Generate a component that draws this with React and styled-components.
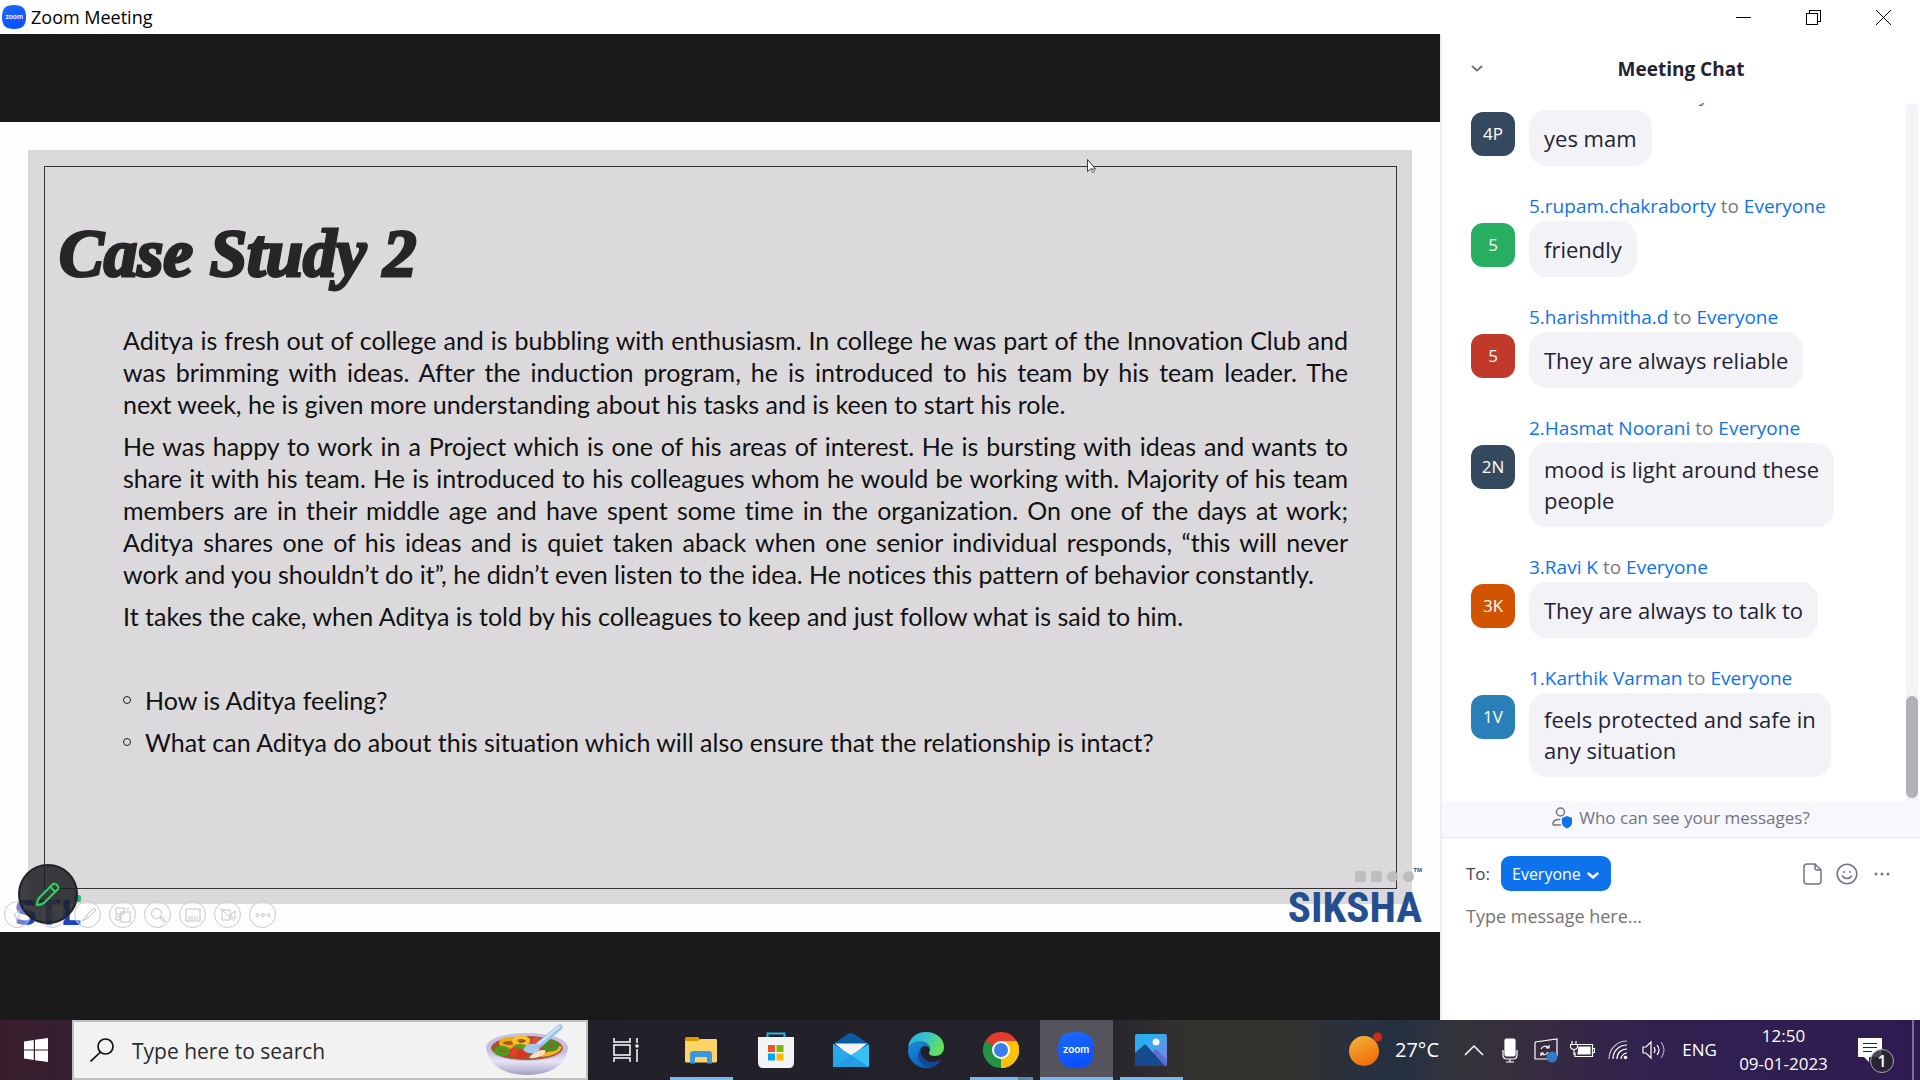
import React from "react";
import styled, { createGlobalStyle } from "styled-components";

const ui = `"Open Sans", "Noto Sans", sans-serif`;

const GlobalStyle = createGlobalStyle`
  *, *::before, *::after { box-sizing: border-box; }
  html, body, #root { height: 100%; }
  body { margin: 0; font-family: ${ui}; background: #fff; overflow: hidden; }
  button { font: inherit; color: inherit; background: none; border: 0; padding: 0; }
  svg { display: block; flex: none; }
`;

const Desktop = styled.div`
  display: grid;
  grid-template-rows: 34px minmax(0, 1fr) 60px;
  height: 100vh;
`;

/* Title bar */
const TitleBar = styled.header`
  display: flex;
  align-items: center;
  gap: 5px;
  padding: 0 2px;
  background: #fff;
`;
const WindowTitle = styled.h1`
  flex: 1;
  margin: 0;
  font-size: 18px;
  line-height: 24px;
  font-weight: 400;
  color: #000;
`;
const WindowButtons = styled.div`
  display: flex;
`;
const WindowButton = styled.button`
  display: grid;
  place-items: center;
  width: 70px;
  height: 34px;
`;

/* Meeting window */
const Meeting = styled.main`
  display: grid;
  grid-template-columns: minmax(0, 1fr) 480px;
  min-height: 0;
`;
const Stage = styled.section`
  display: flex;
  flex-direction: column;
  justify-content: center;
  background: #1a1a1a;
  min-height: 0;
`;
const Share = styled.div`
  position: relative;
  aspect-ratio: 16 / 9;
  padding: 28px;
  background: #fefefe;
`;
const Slide = styled.article`
  height: 100%;
  padding: 16px 15px 15px 16px;
  background: #dbd9dc;
`;
const SlideFrame = styled.div`
  height: 100%;
  padding: 46px 48px 0 14px;
  border: 1px solid #333;
`;
const SlideTitle = styled.h2`
  margin: 0 0 31px;
  font: italic 700 67px/80px "Liberation Serif", serif;
  color: #262626;
  -webkit-text-stroke: 3px #262626;
`;
const SlideBody = styled.div`
  display: flex;
  flex-direction: column;
  gap: 10px;
  padding-left: 64px;
  font: 400 25px/32px Lato, sans-serif;
  font-variant-ligatures: none;
  color: #111;
`;
const Paragraph = styled.p`
  margin: 0;
`;
const Line = styled.span`
  display: block;
  white-space: nowrap;
  text-align: justify;
  text-align-last: ${(p) => (p.$last ? "left" : "justify")};
`;
const Questions = styled.ul`
  display: flex;
  flex-direction: column;
  gap: 10px;
  margin: 42px 0 0;
  padding: 0;
  list-style: none;
`;
const Question = styled.li`
  display: flex;
  align-items: center;
  gap: 14px;
  &::before {
    content: "";
    width: 8px;
    height: 8px;
    border: 1px solid #222;
    border-radius: 50%;
  }
`;
const Pointer = styled.svg`
  position: absolute;
  left: 1087px;
  top: 37px;
`;
const StlLogo = styled.div`
  position: absolute;
  left: 14px;
  bottom: -4px;
  font: 700 33px/45px "DejaVu Sans", sans-serif;
  color: #1a41c8;
  &::after {
    content: "";
    position: absolute;
    right: 0;
    top: 4px;
    width: 7px;
    height: 7px;
    border-radius: 2px;
    background: #25b873;
  }
`;
const SlideTools = styled.div`
  position: absolute;
  left: 4px;
  bottom: 4px;
  display: flex;
  gap: 8px;
`;
const SlideTool = styled.button`
  display: grid;
  place-items: center;
  width: 27px;
  height: 27px;
  border: 1px solid #c9c8cb;
  border-radius: 50%;
  background: rgba(255, 255, 255, 0.35);
`;
const PenButton = styled.button`
  position: absolute;
  left: 18px;
  bottom: 8px;
  display: grid;
  place-items: center;
  width: 60px;
  height: 60px;
  border: 2px solid #202327;
  border-radius: 50%;
  background: rgba(30, 32, 36, 0.86);
`;
const Siksha = styled.div`
  position: absolute;
  right: 18px;
  bottom: 0;
  width: 136px;
  color: #234f90;
`;
const SikshaDots = styled.div`
  display: flex;
  gap: 5px;
  justify-content: flex-end;
  padding-right: 8px;
`;
const SikshaDot = styled.span`
  width: 11px;
  height: 11px;
  border-radius: ${(p) => (p.$round ? "50%" : "1px")};
  background: #bfbdc2;
`;
const Trademark = styled.span`
  position: absolute;
  right: 0;
  top: -5px;
  font: 700 6px/8px "Liberation Sans", sans-serif;
`;
const SikshaName = styled.div`
  font: 700 43px/50px "Roboto Condensed", Roboto, sans-serif;
  text-align: right;
`;

/* Chat */
const Chat = styled.aside`
  display: flex;
  flex-direction: column;
  min-height: 0;
  border-left: 2px solid #ededf3;
  background: #fff;
`;
const ChatHeader = styled.div`
  display: grid;
  grid-template-columns: 40px 1fr 40px;
  align-items: center;
  justify-items: center;
  height: 69px;
  padding: 0 15px;
`;
const IconButton = styled.button`
  display: grid;
  place-items: center;
  height: 24px;
`;
const ChatTitle = styled.h2`
  margin: 0;
  text-align: center;
  font-size: 19px;
  line-height: 26px;
  font-weight: 700;
  color: #232333;
`;
const Feed = styled.div`
  flex: 1;
  min-height: 0;
  display: flex;
`;
const Messages = styled.ol`
  flex: 1;
  display: flex;
  flex-direction: column;
  justify-content: flex-end;
  gap: 27px;
  margin: 0;
  padding: 0 24px 24px 29px;
  overflow: hidden;
  list-style: none;
`;
const Message = styled.li`
  display: grid;
  grid-template-columns: 44px minmax(0, 1fr);
  column-gap: 14px;
  row-gap: 2px;
  justify-items: start;
`;
const Sender = styled.div`
  grid-column: 2;
  font-size: 19px;
  line-height: 26px;
  white-space: nowrap;
  color: #7a7a7a;
`;
const PersonLink = styled.a`
  color: #0e72ed;
  text-decoration: none;
`;
const Avatar = styled.div`
  display: grid;
  place-items: center;
  width: 44px;
  height: 44px;
  margin-top: 2px;
  border-radius: 12px;
  background: ${(p) => p.$color};
  color: #fff;
  font-size: 17px;
  line-height: 24px;
`;
const Bubble = styled.p`
  display: flex;
  align-items: center;
  max-width: 310px;
  min-height: 56px;
  margin: 0;
  padding: 11px 15px;
  border-radius: 18px;
  background: #f2f2f7;
  color: #232333;
  font-size: 22px;
  line-height: 31px;
  white-space: pre-line;
`;
const ScrollTrack = styled.div`
  display: flex;
  flex-direction: column;
  justify-content: flex-end;
  width: 12px;
  margin-right: 2px;
  padding-bottom: 3px;
  border-radius: 6px 6px 0 0;
  background: #f2f2f7;
`;
const ScrollThumb = styled.div`
  height: 102px;
  border-radius: 6px;
  background: #b0b0ba;
`;
const Privacy = styled.button`
  display: flex;
  align-items: center;
  justify-content: center;
  gap: 6px;
  height: 37px;
  padding-bottom: 2px;
  border-bottom: 1px solid #e6e6ee;
  background: #f7f7fc;
  color: #747487;
  font-size: 17px;
  line-height: 24px;
`;
const Composer = styled.form`
  display: flex;
  flex-direction: column;
  gap: 8px;
  height: 182px;
  padding: 18px 28px 0 24px;
`;
const Recipients = styled.div`
  display: flex;
  align-items: center;
  gap: 14px;
`;
const ToLabel = styled.label`
  width: 21px;
  color: #444455;
  font-size: 17px;
  line-height: 24px;
`;
const SelectBox = styled.div`
  position: relative;
  margin-right: auto;
  svg { position: absolute; right: 12px; top: 16px; pointer-events: none; }
`;
const ToSelect = styled.select`
  appearance: none;
  width: 110px;
  height: 35px;
  padding: 0 30px 0 11px;
  border: 0;
  border-radius: 9px;
  background: #0e72ed;
  color: #fff;
  font: 400 16px/24px ${ui};
`;
const MessageBox = styled.textarea`
  flex: 1;
  padding: 0;
  border: 0;
  outline: 0;
  resize: none;
  font: 400 18px/34px ${ui};
  &::placeholder { color: #747474; opacity: 1; }
`;

/* Taskbar */
const Taskbar = styled.footer`
  display: flex;
  color: #fff;
  background: linear-gradient(90deg, #3a1d2d 0%, #33202f 4%, #211f27 30%, #232129 50%, #25232c 57%,
    #34322f 62%, #34322f 67%, #2a303b 70%, #243142 73%, #35343a 76%, #362c40 80%, #302150 86%, #2f1b51 100%);
`;
const StartButton = styled.button`
  display: grid;
  place-items: center;
  width: 72px;
`;
const SearchBox = styled.label`
  display: flex;
  align-items: center;
  gap: 18px;
  width: 516px;
  padding: 0 17px 0 16px;
  border: 2px solid #bfbfbf;
  background: #f2f2f2;
`;
const SearchInput = styled.input`
  flex: 1;
  min-width: 0;
  padding: 2px 0 0;
  border: 0;
  outline: 0;
  background: none;
  font: 400 21px/30px ${ui};
  &::placeholder { color: #2b2b2b; opacity: 1; }
`;
const Apps = styled.nav`
  display: flex;
  flex: 1;
  gap: 2px;
  padding-left: 2px;
`;
const AppButton = styled.button`
  display: grid;
  place-items: center;
  width: 73px;
  height: 60px;
  background: ${(p) => (p.$active ? "#55535b" : "none")};
  border-bottom: 3px solid transparent;
  padding: 3px 2px 0 0;
  border-image: ${(p) =>
    p.$active
      ? "linear-gradient(#76b9ed, #76b9ed) 1"
      : p.$stacked
      ? "linear-gradient(90deg, transparent 6px, #76b9ed 6px, #76b9ed 53px, #55809f 53px, #5f8fb5 67px, transparent 67px) 1"
      : p.$open
      ? "linear-gradient(90deg, transparent 6px, #76b9ed 6px, #76b9ed 67px, transparent 67px) 1"
      : "none"};
`;
const Tray = styled.div`
  display: flex;
  align-items: stretch;
`;
const Weather = styled.button`
  display: flex;
  align-items: center;
  gap: 12px;
  padding-right: 17px;
  font-size: 20px;
  line-height: 28px;
`;
const TrayButton = styled.button`
  display: grid;
  place-items: center;
  width: 36px;
`;
const Language = styled.button`
  width: 55px;
  font-size: 17px;
  line-height: 24px;
`;
const Clock = styled.button`
  width: 113px;
  text-align: center;
  font-size: 17px;
  line-height: 28px;
`;
const Time = styled.time`
  display: block;
`;
const Notifications = styled.button`
  position: relative;
  width: 72px;
  svg { position: absolute; left: 18px; top: 18px; }
`;
const Count = styled.span`
  position: absolute;
  left: 30px;
  top: 29px;
  width: 24px;
  height: 24px;
  border: 1px solid #a9a6b3;
  border-radius: 50%;
  background: rgba(40, 38, 48, 0.85);
  font-size: 16px;
  line-height: 22px;
  font-weight: 600;
`;
const ShowDesktop = styled.button`
  width: 8px;
  border-left: 2px solid #7c6f92;
`;

const ZoomMark = ({ size }) => (
  <svg width={size} height={size} viewBox="0 0 36 36">
    <defs>
      <linearGradient id="zm" x1="0" y1="0" x2="0.3" y2="1">
        <stop offset="0" stopColor="#1a6bff" />
        <stop offset="1" stopColor="#0b50fa" />
      </linearGradient>
    </defs>
    <path d="M18 0C31 0 36 5 36 18S31 36 18 36 0 31 0 18 5 0 18 0z" fill="url(#zm)" />
    <text x="18" y="21" textAnchor="middle" fontFamily="Inter, sans-serif" fontWeight="600" fontSize="10" fill="#fff">zoom</text>
  </svg>
);

const toolIcons = [
  <path d="M9 3 4 8l5 5z" />,
  <path d="M5 3v10l6-5z" />,
  <path d="m14 1-8 8 2 2 8-8zM6 9l-4 5 6-3z" />,
  <g><rect x="1" y="1" width="8" height="6" /><rect x="6" y="5" width="9" height="10" /><path d="M1 9h4v4H1zM11 2h3" /></g>,
  <g><circle cx="6.5" cy="6.5" r="5" /><path d="m10 11 1-1 5 4-1.500 1.500z" /></g>,
  <g><rect x="1" y="2" width="14" height="12" /><path d="M3 10h10M3 12h10" strokeDasharray="2 1" /></g>,
  <g><path d="M2 3h8v10H2zM11 7l4-3v8l-4-3zM0 1l14 13" /></g>,
  <g><circle cx="2.500" cy="8" r="1.500" /><circle cx="8" cy="8" r="1.500" /><circle cx="13.500" cy="8" r="1.500" /></g>,
];
const toolNames = ["Previous", "Next", "Pen", "All slides", "Magnify", "Captions", "Camera", "More"];

const Bowl = () => (
  <svg width="84" height="52" viewBox="0 0 84 52">
    <defs>
      <linearGradient id="bw" x1="0" y1="0" x2="0" y2="1">
        <stop offset="0" stopColor="#b9b0d6" />
        <stop offset="0.5" stopColor="#e8e6f5" />
        <stop offset="1" stopColor="#a59dc6" />
      </linearGradient>
    </defs>
    <path d="M1 23C3 42 20 51 42 51S81 42 83 23z" fill="url(#bw)" />
    <ellipse cx="42" cy="23" rx="41" ry="14" fill="#c7c1e0" />
    <ellipse cx="42" cy="24" rx="36" ry="12" fill="#a4552f" />
    <g fill="none" strokeWidth="4">
      <ellipse cx="24" cy="19" rx="8" ry="4" stroke="#f5a90b" />
      <ellipse cx="36" cy="17" rx="7" ry="4" stroke="#ffc22c" />
      <path d="M56 31c9 0 18-4 19-9" stroke="#f9b22b" />
      <ellipse cx="17" cy="27" rx="6" ry="3" stroke="#4c9c1c" />
      <ellipse cx="66" cy="22" rx="6" ry="3.500" stroke="#3f961f" />
      <ellipse cx="35" cy="24" rx="5" ry="2" stroke="#579b22" />
    </g>
    <circle cx="51" cy="17" r="4" fill="#e54b30" />
    <circle cx="30" cy="28" r="5" fill="#e23d28" />
    <circle cx="37" cy="30" r="5" fill="#d63423" />
    <path d="M44 34c4-6 9-8 16-8 2 4-6 9-16 8z" fill="#f8dfc4" />
    <path d="M38 26c2-5 8-8 14-5l3 4c-3 5-12 6-17 1z" fill="#a9c9ec" />
    <path d="M50 20 73 1c3-2 6 1 4 4L55 24z" fill="#9dc3ee" />
    <path d="M53 20 75 2" stroke="#d4e7fb" strokeWidth="2" />
  </svg>
);

const apps = [
  { name: "Task View", icon: (
    <svg width="26" height="26" viewBox="0 0 26 26" fill="none" stroke="#fff" strokeWidth="1.500">
      <path d="M1 1v4h16V1M1 25v-4h16v4M1 8h16v10H1zM24 1v5M24 12v13" /><path d="M22.500 7.500h3v3h-3z" fill="#fff" stroke="none" />
    </svg>) },
  { name: "File Explorer", open: true, icon: (
    <svg width="32" height="27" viewBox="0 0 32 27">
      <path d="M0 1.500Q0 0 1.500 0H13l2 2v4H0z" fill="#dd9a00" />
      <path d="M0 4h13l3-2h15q1 0 1 1v21q0 1.500-1.500 1.500h-29Q0 25.500 0 24z" fill="#fdd465" />
      <path d="M5 26.500V17q0-3 3-3h16q3 0 3 3v9.500h-5V20H10v6.500z" fill="#3a96dd" />
    </svg>) },
  { name: "Microsoft Store", icon: (
    <svg width="36" height="36" viewBox="0 0 36 36">
      <path d="M9.500 8V1.500h17V8" fill="none" stroke="#2bb5ec" strokeWidth="2" />
      <path d="M0 5h36v25q0 6-5 6H5q-5 0-5-6z" fill="#f4f4f4" />
      <path d="M10 13h7v7h-7z" fill="#f25022" /><path d="M18.500 13h7v7h-7z" fill="#7fba00" />
      <path d="M10 21.500h7v7h-7z" fill="#00a4ef" /><path d="M18.500 21.500h7v7h-7z" fill="#ffb900" />
    </svg>) },
  { name: "Mail", icon: (
    <svg width="36" height="34" viewBox="0 0 36 34">
      <path d="M0 11 15 1q3-2 6 0l15 10-18 13z" fill="#0c59a4" />
      <path d="M2 10.500h32L18 24z" fill="#f3f3f5" />
      <path d="M0 11l18 11 18-11v23H0z" fill="#35c1f1" />
      <path d="M0 11l36 23H0z" fill="#28a8ea" />
      <path d="M18 22 36 34H0z" fill="#1a8ad8" opacity=".35" />
    </svg>) },
  { name: "Edge", icon: (
    <svg width="36" height="36" viewBox="0 0 36 36">
      <defs>
        <linearGradient id="eg" x1="0" y1="0" x2="1" y2="0.400">
          <stop offset="0" stopColor="#28a9e8" /><stop offset="0.5" stopColor="#34c5c9" /><stop offset="1" stopColor="#63e05a" />
        </linearGradient>
        <linearGradient id="eb" x1="0" y1="0" x2="0.600" y2="1">
          <stop offset="0" stopColor="#1b8fdc" /><stop offset="1" stopColor="#0a5fb8" />
        </linearGradient>
      </defs>
      <path d="M0 16C1 6 8 0 18 0c11 0 18 7 18 15 0 6-4 9-9 9-4 0-6-1-6-3 0-1 1-2 1-4 0-4-4-7-9-7C6 10 2 12 0 16z" fill="url(#eg)" />
      <path d="M0 18C1 12 6 9 12 9c6 0 10 4 10 8-1-2-3-3-5-3-4 0-6 4-5 9 1 6 6 11 13 12-2 1-5 1-7 1C8 36 0 28 0 18z" fill="url(#eb)" />
      <path d="M13 18c-1 6 4 12 12 12 3 0 6-1 8-3-2 5-6 8-10 8-7 0-13-5-13-11 0-3 1-5 3-6z" fill="#15489a" />
    </svg>) },
  { name: "Chrome", stacked: true, icon: (
    <svg width="36" height="36" viewBox="0 0 36 36">
      <path d="M18 18 2.400 9A18 18 0 0 1 33.600 9z" fill="#e33b2e" />
      <path d="M18 18 33.600 9A18 18 0 0 1 18 36z" fill="#fdc10c" />
      <path d="M18 18 18 36A18 18 0 0 1 2.400 9z" fill="#229342" />
      <path d="M18 9h15.600A18 18 0 0 1 18 36l7.800-13.500z" fill="#fdc10c" />
      <circle cx="18" cy="18" r="9" fill="#fff" /><circle cx="18" cy="18" r="7" fill="#3b7ded" />
    </svg>) },
  { name: "Zoom", active: true, icon: <ZoomMark size={36} /> },
  { name: "Photos", open: true, icon: (
    <svg width="32" height="32" viewBox="0 0 32 32">
      <defs>
        <linearGradient id="ph" x1="0" y1="0" x2="1" y2="1">
          <stop offset="0.300" stopColor="#2aaef0" /><stop offset="1" stopColor="#8a7fe0" />
        </linearGradient>
        <clipPath id="phc"><rect width="32" height="32" rx="2" /></clipPath>
      </defs>
      <g clipPath="url(#phc)">
        <rect width="32" height="32" fill="url(#ph)" />
        <path d="M8 32 20 16q1-1 2 0l10 10v6z" fill="#5a6fd0" />
        <path d="M0 19 9 11q1-1 2 0l19 21H0z" fill="#164a8c" />
        <circle cx="21" cy="8" r="3.500" fill="#f7f3f0" />
      </g>
    </svg>) },
];

const tray = [
  { name: "Show hidden icons", icon: <svg width="20" height="12" viewBox="0 0 20 12" fill="none" stroke="#fff" strokeWidth="1.500"><path d="m1 11 9-9 9 9" /></svg> },
  { name: "Microphone", icon: (
    <svg width="16" height="25" viewBox="0 0 16 25" fill="none" stroke="#fff" strokeWidth="1.200">
      <rect x="3" y="1" width="10" height="17" rx="1.500" fill="#fff" /><path d="M1 12v5q0 4 4 4h6q4 0 4-4v-5M8 21v3M4 24h8" />
    </svg>) },
  { name: "Sync", icon: (
    <svg width="24" height="25" viewBox="0 0 24 25" fill="none" stroke="#fff" strokeWidth="1.200">
      <path d="M1 4 23 1v17M1 4v17h12" /><path d="M7 11q3-5 8-1M15 7v3h-3M14 14q-3 5-7 1M7 18v-3h3" />
      <circle cx="18" cy="19" r="5.500" fill="#2f7bc8" stroke="none" />
    </svg>) },
  { name: "Battery", icon: (
    <svg width="25" height="18" viewBox="0 0 25 18" fill="none" stroke="#fff" strokeWidth="1.200">
      <path d="M8 3.500h14.500v12H5v-4M22.500 7.500h2v4h-2" /><path d="M9 6h11v7H8z" fill="#fff" /><path d="M2 0v3M6 0v3M0.500 3.500h7v3q-1 2-3.500 2T0.500 6.500zM4 8v6" />
    </svg>) },
  { name: "Network", icon: (
    <svg width="20" height="20" viewBox="0 0 20 20" fill="none" stroke="#fff" strokeWidth="1.200">
      <path d="M1 19C1 9 9 1 19 1" opacity=".7" /><path d="M5 19C5 11 11 5 19 5M9 19c0-6 4-10 10-10M13 19c0-3 3-6 6-6" /><circle cx="17.500" cy="17.500" r="1.800" fill="#fff" stroke="none" />
    </svg>) },
  { name: "Volume", icon: (
    <svg width="24" height="20" viewBox="0 0 24 20" fill="none" stroke="#fff" strokeWidth="1.200">
      <path d="M1 7h3l5-5v16l-5-5H1z" /><path d="M12 7q2 3 0 6M15 5q4 5 0 10" /><path d="M19 2q6 8 0 16" opacity=".6" />
    </svg>) },
];

const messages = [
  { from: "4.Prakash P", initials: "4P", color: "#34495e", text: "yes mam" },
  { from: "5.rupam.chakraborty", initials: "5", color: "#27ae60", text: "friendly" },
  { from: "5.harishmitha.d", initials: "5", color: "#c0392b", text: "They are always reliable" },
  { from: "2.Hasmat Noorani", initials: "2N", color: "#34495e", text: "mood is light around these\npeople" },
  { from: "3.Ravi K", initials: "3K", color: "#d35400", text: "They are always to talk to" },
  { from: "1.Karthik Varman", initials: "1V", color: "#2980b9", text: "feels protected and safe in\nany situation" },
];

const paragraphs = [
  [
    "Aditya is fresh out of college and is bubbling with enthusiasm. In college he was part of the Innovation Club and",
    "was brimming with ideas. After the induction program, he is introduced to his team by his team leader. The",
    "next week, he is given more understanding about his tasks and is keen to start his role.",
  ],
  [
    "He was happy to work in a Project which is one of his areas of interest. He is bursting with ideas and wants to",
    "share it with his team. He is introduced to his colleagues whom he would be working with. Majority of his team",
    "members are in their middle age and have spent some time in the organization. On one of the days at work;",
    "Aditya shares one of his ideas and is quiet taken aback when one senior individual responds, “this will never",
    "work and you shouldn’t do it”, he didn’t even listen to the idea. He notices this pattern of behavior constantly.",
  ],
  ["It takes the cake, when Aditya is told by his colleagues to keep and just follow what is said to him."],
];

const Chevron = ({ color, width, strokeWidth }) => (
  <svg width={width} height="8" viewBox="0 0 12 8" fill="none" stroke={color} strokeWidth={strokeWidth} strokeLinecap="round" strokeLinejoin="round">
    <path d="m1.500 1.500 4.500 4 4.500-4" />
  </svg>
);

export default function App() {
  return (
    <Desktop>
      <GlobalStyle />
      <TitleBar>
        <ZoomMark size={24} />
        <WindowTitle>Zoom Meeting</WindowTitle>
        <WindowButtons>
          <WindowButton aria-label="Minimize">
            <svg width="15" height="15" shapeRendering="crispEdges"><path d="M0 7.500h15" stroke="#000" /></svg>
          </WindowButton>
          <WindowButton aria-label="Restore">
            <svg width="15" height="15" fill="none" stroke="#000" shapeRendering="crispEdges">
              <path d="M.5 3.500h11v11H.5zM3.500 3.500v-3h11v11h-3" />
            </svg>
          </WindowButton>
          <WindowButton aria-label="Close">
            <svg width="15" height="15" stroke="#000"><path d="m0 0 15 15M15 0 0 15" /></svg>
          </WindowButton>
        </WindowButtons>
      </TitleBar>

      <Meeting>
        <Stage>
          <Share>
            <Slide>
              <SlideFrame>
                <SlideTitle>Case Study 2</SlideTitle>
                <SlideBody>
                  {paragraphs.map((lines, i) => (
                    <Paragraph key={i}>
                      {lines.map((line, j) => (
                        <Line key={j} $last={j === lines.length - 1}>{line}</Line>
                      ))}
                    </Paragraph>
                  ))}
                  <Questions>
                    <Question>How is Aditya feeling?</Question>
                    <Question>What can Aditya do about this situation which will also ensure that the relationship is intact?</Question>
                  </Questions>
                </SlideBody>
              </SlideFrame>
            </Slide>
            <StlLogo>STL</StlLogo>
            <SlideTools>
              {toolIcons.map((icon, i) => (
                <SlideTool key={i} aria-label={toolNames[i]}>
                  <svg width="16" height="16" viewBox="0 0 16 16" fill="none" stroke="#c3c2c6">{icon}</svg>
                </SlideTool>
              ))}
            </SlideTools>
            <PenButton aria-label="Annotate">
              <svg width="24" height="24" viewBox="0 0 24 24" fill="none" stroke="#23d959" strokeWidth="2" strokeLinejoin="round">
                <path d="M1 23q0-5 3-8L17 2q2-1 4 1t1 4L9 20q-3 3-8 3zM14.500 5l4.500 4.500" />
              </svg>
            </PenButton>
            <Siksha>
              <Trademark>TM</Trademark>
              <SikshaDots>
                <SikshaDot /><SikshaDot /><SikshaDot $round /><SikshaDot $round />
              </SikshaDots>
              <SikshaName>SIKSHA</SikshaName>
            </Siksha>
            <Pointer width="10" height="15" viewBox="0 0 10 15">
              <path d="M.5.500v12l3-2.500h5z" fill="#fff" stroke="#3a3a44" />
              <circle cx="6" cy="12" r="1.500" fill="none" stroke="#777785" />
            </Pointer>
          </Share>
        </Stage>

        <Chat>
          <ChatHeader>
            <IconButton aria-label="Collapse chat"><Chevron color="#747487" width={12} strokeWidth={2} /></IconButton>
            <ChatTitle>Meeting Chat</ChatTitle>
          </ChatHeader>
          <Feed>
            <Messages>
              {messages.map((m) => (
                <Message key={m.from}>
                  <Sender>
                    <PersonLink href="#sender">{m.from}</PersonLink> to <PersonLink href="#everyone">Everyone</PersonLink>
                  </Sender>
                  <Avatar $color={m.color}>{m.initials}</Avatar>
                  <Bubble>{m.text}</Bubble>
                </Message>
              ))}
            </Messages>
            <ScrollTrack><ScrollThumb /></ScrollTrack>
          </Feed>
          <Privacy>
            <svg width="21" height="22" viewBox="0 0 21 22" fill="none" stroke="#747487" strokeWidth="1.500">
              <circle cx="8.500" cy="5" r="4" /><path d="M9 18H1.500q-1-1 0-3 1.500-2.500 5-2.500h2" />
              <path d="m15 9 5 2v5q0 3-5 5.500-5-2.500-5-5.500v-5z" fill="#0e72ed" stroke="none" />
            </svg>
            Who can see your messages?
          </Privacy>
          <Composer>
            <Recipients>
              <ToLabel htmlFor="recipient">To:</ToLabel>
              <SelectBox>
                <ToSelect id="recipient"><option>Everyone</option></ToSelect>
                <Chevron color="#fff" width={12} strokeWidth={2.5} />
              </SelectBox>
              <IconButton type="button" aria-label="Attach file">
                <svg width="19" height="22" viewBox="0 0 19 22" fill="none" stroke="#747487" strokeWidth="1.500" strokeLinejoin="round">
                  <path d="M4 1h8l6 6v11q0 3-3 3H4q-3 0-3-3V4q0-3 3-3zM12 1v4q0 2 2 2h4" />
                </svg>
              </IconButton>
              <IconButton type="button" aria-label="Emoji">
                <svg width="22" height="22" viewBox="0 0 22 22" fill="none" stroke="#747487" strokeWidth="1.600" strokeLinecap="round">
                  <circle cx="11" cy="11" r="9.800" /><path d="M6.500 13q1.500 2.500 4.500 2.500t4.500-2.500" />
                  <circle cx="8" cy="9" r="1" fill="#747487" stroke="none" /><circle cx="14" cy="9" r="1" fill="#747487" stroke="none" />
                </svg>
              </IconButton>
              <IconButton type="button" aria-label="More options">
                <svg width="20" height="4" viewBox="0 0 20 4" fill="#747487">
                  <circle cx="4" cy="2" r="1.500" /><circle cx="10" cy="2" r="1.500" /><circle cx="16" cy="2" r="1.500" />
                </svg>
              </IconButton>
            </Recipients>
            <MessageBox aria-label="Message" placeholder="Type message here..." />
          </Composer>
        </Chat>
      </Meeting>

      <Taskbar>
        <StartButton aria-label="Start">
          <svg width="24" height="24" viewBox="0 0 24 24" fill="#fff">
            <path d="M0 3.500 9.800 2v9.500H0zM11 1.800 24 0v11.500H11zM0 12.500h9.800V22L0 20.500zM11 12.500h13V24l-13-1.800z" />
          </svg>
        </StartButton>
        <SearchBox>
          <svg width="24" height="24" viewBox="0 0 24 24" fill="none" stroke="#111" strokeWidth="1.700">
            <circle cx="15.500" cy="8.500" r="7.500" /><path d="M10.500 14 0.500 23.500" />
          </svg>
          <SearchInput aria-label="Search" placeholder="Type here to search" />
          <Bowl />
        </SearchBox>
        <Apps aria-label="Apps">
          {apps.map((a) => (
            <AppButton key={a.name} aria-label={a.name} $open={a.open} $stacked={a.stacked} $active={a.active}>{a.icon}</AppButton>
          ))}
        </Apps>
        <Tray>
          <Weather>
            <svg width="34" height="36" viewBox="0 0 34 36">
              <defs>
                <linearGradient id="sun" x1="0.200" y1="0" x2="0.700" y2="1">
                  <stop offset="0" stopColor="#f2b233" /><stop offset="1" stopColor="#f0690a" />
                </linearGradient>
              </defs>
              <circle cx="15" cy="19" r="15" fill="url(#sun)" /><circle cx="28.500" cy="5" r="4.500" fill="#cc2a1c" />
            </svg>
            27°C
          </Weather>
          {tray.map((t) => (
            <TrayButton key={t.name} aria-label={t.name}>{t.icon}</TrayButton>
          ))}
          <Language>ENG</Language>
          <Clock>
            <Time>12:50</Time>
            <Time>09-01-2023</Time>
          </Clock>
          <Notifications aria-label="Notifications">
            <svg width="24" height="24" viewBox="0 0 24 24">
              <path d="M0 0h24v19H11v5l-5-5H0z" fill="#fff" /><path d="M5 5.500h14M5 9.500h14M5 13.500h9" stroke="#2f1b51" />
            </svg>
            <Count>1</Count>
          </Notifications>
          <ShowDesktop aria-label="Show desktop" />
        </Tray>
      </Taskbar>
    </Desktop>
  );
}
